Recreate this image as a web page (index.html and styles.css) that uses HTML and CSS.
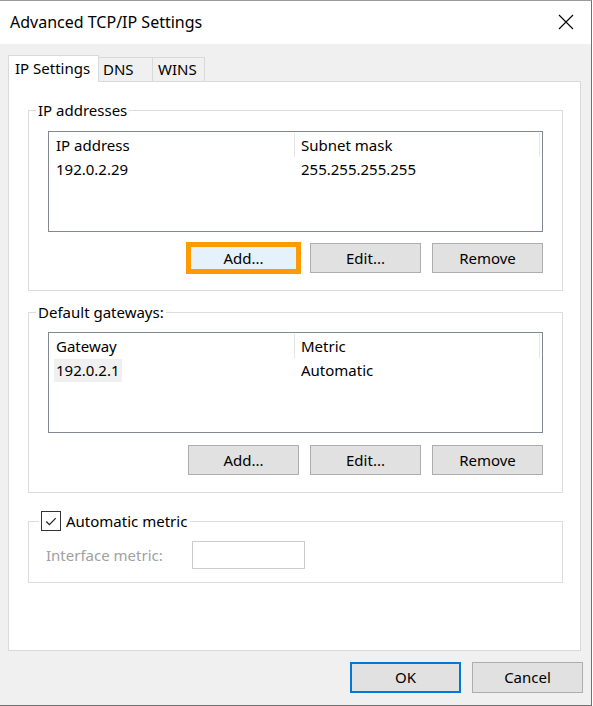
FILE: index.html
```html
<!DOCTYPE html>
<html>
<head>
<meta charset="utf-8">
<link rel="stylesheet" href="styles.css">
</head>
<body>
<div class="window">
  <div class="titlebar">
    <span class="title">Advanced TCP/IP Settings</span>
    <svg class="close" width="16" height="16" viewBox="0 0 16 16"><path d="M1 1L15 15M15 1L1 15" stroke="#000" stroke-width="1.1" fill="none"/></svg>
  </div>
  <div class="client">
    <div class="tabs">
      <div class="tab active">IP Settings</div>
      <div class="tab dns">DNS</div>
      <div class="tab wins">WINS</div>
    </div>
    <div class="panel">
      <fieldset class="group g1">
        <legend class="legend">IP addresses</legend>
        <div class="group-body">
          <div class="listview">
            <div class="lv-head">
              <div class="col c1">IP address</div>
              <div class="col c2">Subnet mask</div>
            </div>
            <div class="lv-row">
              <div class="cell c1"><span>192.0.2.29</span></div>
              <div class="cell c2"><span>255.255.255.255</span></div>
            </div>
          </div>
          <div class="btnrow">
            <div class="btn hot">Add...<span class="mark"></span></div>
            <div class="btn">Edit...</div>
            <div class="btn">Remove</div>
          </div>
        </div>
      </fieldset>
      <fieldset class="group g2">
        <legend class="legend">Default gateways:</legend>
        <div class="group-body">
          <div class="listview">
            <div class="lv-head">
              <div class="col c1">Gateway</div>
              <div class="col c2">Metric</div>
            </div>
            <div class="lv-row">
              <div class="cell c1"><span class="sel">192.0.2.1</span></div>
              <div class="cell c2"><span>Automatic</span></div>
            </div>
          </div>
          <div class="btnrow">
            <div class="btn">Add...</div>
            <div class="btn">Edit...</div>
            <div class="btn">Remove</div>
          </div>
        </div>
      </fieldset>
      <fieldset class="group g3">
        <legend class="legend chk">
          <span class="checkbox"><svg width="19" height="19" viewBox="0 0 19 19"><path d="M4.5 9.5L7.8 12.8L14.5 6" stroke="#222" stroke-width="1.3" fill="none"/></svg></span>
          <span>Automatic metric</span>
        </legend>
        <div class="metric-row">
          <span class="disabled">Interface metric:</span>
          <span class="textbox"></span>
        </div>
      </fieldset>
    </div>
    <div class="footer">
      <div class="btn default">OK</div>
      <div class="btn">Cancel</div>
    </div>
  </div>
</div>
</body>
</html>
```
FILE: styles.css
```css
html, body {
  margin: 0;
  padding: 0;
  background: #ffffff;
}
body {
  font-family: "Noto Sans", "Open Sans", sans-serif;
  font-size: 15px;
  color: #000;
}
.window {
  width: 591px;
  height: 704px;
  border-top: 1px solid #9a9a9a;
  border-right: 1px solid #6f6f6f;
  border-bottom: 1px solid #6f6f6f;
  display: flex;
  flex-direction: column;
  background: #f0f0f0;
}
.titlebar {
  height: 43px;
  background: #ffffff;
  display: flex;
  align-items: center;
  justify-content: space-between;
  padding: 0 17px 0 10px;
}
.title {
  font-size: 16px;
  line-height: 20px;
  margin-top: -1px;
}
.close {
  margin-top: -1px;
}
.client {
  flex: 1;
  display: flex;
  flex-direction: column;
  padding: 11px 10px 0 8px;
}
.tabs {
  display: flex;
  align-items: flex-end;
  height: 26px;
  position: relative;
  z-index: 1;
}
.tab {
  box-sizing: border-box;
  height: 24px;
  border: 1px solid #d9d9d9;
  border-bottom: none;
  background: #f0f0f0;
  line-height: 22px;
  padding: 0 4px;
}
.tab.active {
  height: 27px;
  margin-bottom: -1px;
  background: #ffffff;
  width: 91px;
  padding: 0 6px;
  line-height: 25px;
}
.tab.dns {
  width: 54px;
  border-left: none;
  padding-left: 4px;
}
.tab.wins {
  width: 52px;
  border-left: none;
  padding-left: 5px;
}
.panel {
  box-sizing: border-box;
  height: 570px;
  background: #ffffff;
  border: 1px solid #d9d9d9;
  padding: 18px 17px 0 19px;
  display: flex;
  flex-direction: column;
}
.group {
  margin: 0;
  padding: 0;
  border: 1px solid #dcdcdc;
  min-width: 0;
}
.legend {
  margin-left: 7px;
  padding: 0 2px;
  line-height: 20px;
  height: 20px;
}
.group-body {
  padding: 11px 19px 16px 19px;
}
.g2 {
  margin-top: 11px;
}
.g2 .group-body {
  padding-top: 10px;
  padding-bottom: 16px;
}
.g2 .btnrow {
  margin-top: 12px;
}
.listview {
  box-sizing: border-box;
  height: 101px;
  border: 1px solid #828790;
  background: #fff;
}
.lv-head {
  display: flex;
  height: 25px;
  margin-top: 1px;
}
.col {
  box-sizing: border-box;
  height: 24px;
  line-height: 24px;
  padding-left: 7px;
  border-right: 1px solid #e5e5e5;
}
.c1 {
  width: 246px;
}
.c2 {
  width: 245px;
  padding-left: 6px;
}
.lv-row {
  display: flex;
  height: 23px;
}
.cell {
  box-sizing: border-box;
  line-height: 23px;
  padding-left: 5px;
}
.cell span {
  display: inline-block;
  padding: 0 2px;
}
.cell.c2 {
  padding-left: 4px;
}
.cell .sel {
  background: #f0f0f0;
}
.btnrow {
  display: flex;
  justify-content: flex-end;
  gap: 11px;
  margin-top: 11px;
}
.btn {
  box-sizing: border-box;
  width: 111px;
  height: 31px;
  border: 1px solid #adadad;
  background: #e1e1e1;
  text-align: center;
  line-height: 29px;
  position: relative;
}
.btn.hot {
  background: #e5f1fb;
  border-color: #0078d7;
}
.mark {
  position: absolute;
  left: -3px;
  top: -2px;
  right: -3px;
  bottom: -2px;
  border: 5px solid #ff9a00;
}
.g3 {
  margin-top: 18px;
}
.legend.chk {
  display: flex;
  align-items: center;
  gap: 5px;
  margin-left: 10px;
  padding: 0 3px 0 2px;
}
.checkbox {
  box-sizing: border-box;
  width: 20px;
  height: 20px;
  border: 1px solid #333;
  background: #fff;
  display: flex;
  align-items: center;
  justify-content: center;
}
.metric-row {
  display: flex;
  align-items: center;
  padding: 10px 0 13px 17px;
}
.disabled {
  color: #a0a0a0;
  width: 146px;
}
.textbox {
  box-sizing: border-box;
  width: 113px;
  height: 28px;
  border: 1px solid #cccccc;
  background: #fff;
}
.footer {
  display: flex;
  justify-content: flex-end;
  gap: 11px;
  padding: 11px 0 0 0;
  margin-right: -2px;
}
.btn.default {
  border: 2px solid #0078d7;
  line-height: 27px;
}
.btnrow .btn {
  height: 30px;
  line-height: 28px;
}
.g1 .group-body {
  padding-bottom: 17px;
}
.g2 .group-body {
  padding-bottom: 17px;
}
```
